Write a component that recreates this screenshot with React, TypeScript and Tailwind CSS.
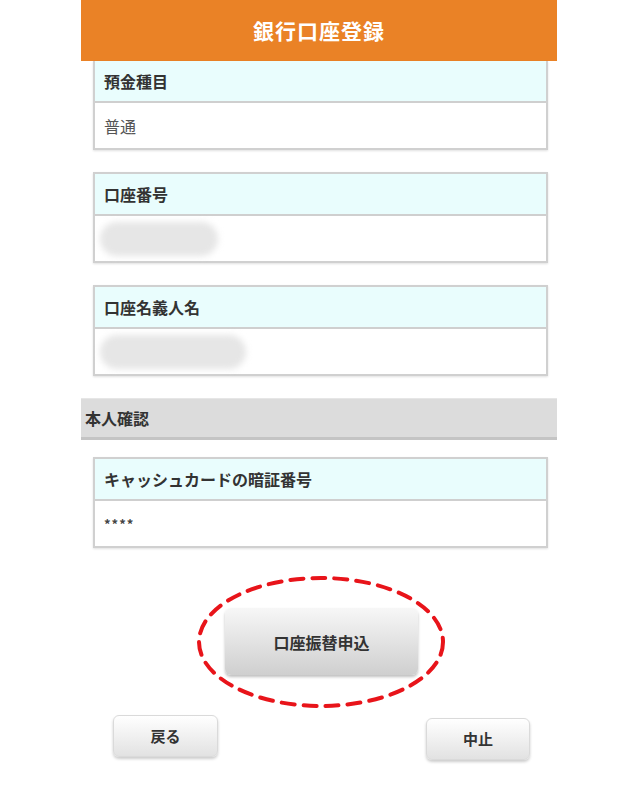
import React from 'react';

const jp = '[font-family:"Noto_Sans_CJK_JP",sans-serif]';

function Field({ label, first, children }: { label: string; first?: boolean; children: React.ReactNode }) {
  return (
    <div
      className={`ml-3 mr-[9px] border-2 border-[#d0d0d0] bg-white shadow-[0_1px_2px_rgba(0,0,0,0.12)] ${first ? 'border-t-0' : ''}`}
    >
      <div className="h-[42px] flex items-center px-[9px] bg-[#e9fdfd] border-b-2 border-[#cfcfcf]">
        <span className="text-[16px] font-bold text-[#333]">{label}</span>
      </div>
      <div className="h-[45px] flex items-center px-[9px]">{children}</div>
    </div>
  );
}

function Blob({ w }: { w: string }) {
  return <div className={`h-[34px] ${w} rounded-full bg-[#e6e6e6] blur-[3px] -ml-[4px]`} />;
}

export default function App() {
  return (
    <div className={`w-[640px] h-[811px] bg-white ${jp}`}>
      <div className="w-[476px] ml-[81px]">
        <div className="h-[61px] bg-[#ea8226] flex items-center justify-center">
          <span className="text-white text-[21px] font-bold tracking-[1px]">銀行口座登録</span>
        </div>

        <Field label="預金種目" first>
          <span className="text-[16px] text-[#555]">普通</span>
        </Field>

        <div className="mt-[22px]">
          <Field label="口座番号">
            <Blob w="w-[118px]" />
          </Field>
        </div>

        <div className="mt-[22px]">
          <Field label="口座名義人名">
            <Blob w="w-[146px]" />
          </Field>
        </div>

        <div className="mt-[22px] h-[42px] bg-[#dcdcdc] border-t border-[#e6e6e6] border-b-[3px] border-b-[#c4c4c4] flex items-center px-[4px]">
          <span className="text-[16px] font-bold text-[#333]">本人確認</span>
        </div>

        <div className="mt-[17px]">
          <Field label="キャッシュカードの暗証番号">
            <span className="text-[13px] text-[#444] tracking-[1px] font-bold">****</span>
          </Field>
        </div>

        <div className="mt-[60px] flex justify-center">
          <div className="relative ml-[5px]">
            <button className="w-[193px] h-[67px] rounded-[6px] bg-gradient-to-b from-[#f7f7f7] to-[#cfcfcf] shadow-[0_2px_3px_rgba(0,0,0,0.25)] text-[16px] font-bold text-[#333]">
              口座振替申込
            </button>
            <svg
              className="absolute left-[-29px] top-[-33px] pointer-events-none"
              width="250"
              height="134"
              viewBox="0 0 250 134"
            >
              <ellipse
                cx="125"
                cy="67"
                rx="122"
                ry="64"
                fill="none"
                stroke="#e8141a"
                strokeWidth="4"
                strokeDasharray="13 9"
                strokeLinecap="round"
              />
            </svg>
          </div>
        </div>

        <div className="mt-[40px] flex justify-between px-[32px]">
          <button className="w-[105px] h-[42px] rounded-[6px] bg-gradient-to-b from-[#ffffff] to-[#e2e2e2] border border-[#dadada] shadow-[0_2px_3px_rgba(0,0,0,0.2)] text-[15px] font-bold text-[#333]">
            戻る
          </button>
          <button className="w-[104px] h-[42px] mt-[3px] mr-[-5px] rounded-[6px] bg-gradient-to-b from-[#ffffff] to-[#e2e2e2] border border-[#dadada] shadow-[0_2px_3px_rgba(0,0,0,0.2)] text-[15px] font-bold text-[#333]">
            中止
          </button>
        </div>
      </div>
    </div>
  );
}
